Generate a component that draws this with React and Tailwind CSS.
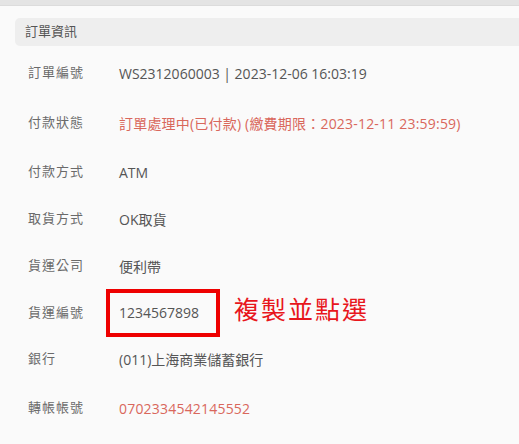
export default function App() {
  const rows = [
    { label: "訂單編號", value: "WS2312060003 | 2023-12-06 16:03:19", h: "h-[48px]" },
    {
      label: "付款狀態",
      value: "訂單處理中(已付款) (繳費期限：2023-12-11 23:59:59)",
      red: true,
      h: "h-[52px]",
    },
    { label: "付款方式", value: "ATM", h: "h-[46px]" },
    { label: "取貨方式", value: "OK取貨", h: "h-[48px]" },
    { label: "貨運公司", value: "便利帶", h: "h-[46px]" },
    { label: "貨運編號", value: "1234567898", boxed: true, h: "h-[47px]" },
    { label: "銀行", value: "(011)上海商業儲蓄銀行", h: "h-[46px]" },
    { label: "轉帳帳號", value: "0702334542145552", red: true, h: "h-[52px]" },
  ];

  return (
    <div
      className="w-[519px] h-[444px] overflow-hidden bg-[#fafafa]"
      style={{ fontFamily: '"Open Sans", "Noto Sans CJK TC", sans-serif' }}
    >
      <div className="h-[6px] bg-[#e4e4e4] border-b border-[#dcdcdc]" />
      <div className="pl-[15px] pt-[12px]">
        <div className="h-[28px] bg-[#eeeeee] rounded-l-[5px] flex items-center pl-[10px] text-[13px] text-[#555]">
          訂單資訊
        </div>
        <div className="pt-[3px]">
          {rows.map((row) => (
            <div key={row.label} className={`flex items-center ${row.h}`}>
              <div className="w-[104px] pl-[13px] text-[13px] text-[#6a6a6a] tracking-[1px]">
                {row.label}
              </div>
              {row.boxed ? (
                <div className="flex items-center">
                  <div className="-ml-[13px] w-[114px] h-[48px] border-[4px] border-[#ee0000] flex items-center pl-[9px] text-[14px] text-[#555]">
                    {row.value}
                  </div>
                  <div className="ml-[14px] -mt-[6px] text-[25px] text-[#e8161c] tracking-[2px]">
                    複製並點選
                  </div>
                </div>
              ) : (
                <div
                  className={
                    row.red
                      ? "text-[14px] text-[#d9675c] tracking-[0.2px]"
                      : "text-[14px] text-[#555]"
                  }
                >
                  {row.value}
                </div>
              )}
            </div>
          ))}
        </div>
      </div>
    </div>
  );
}
